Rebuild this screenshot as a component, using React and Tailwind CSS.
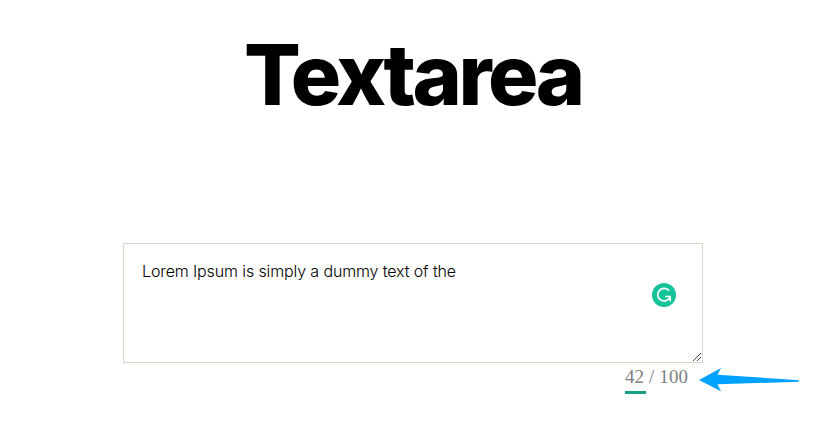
export default function App() {
  return (
    <main className="flex h-[423px] w-[833px] flex-col overflow-hidden bg-white">
      <h1 className="mt-[33px] ml-[244px] h-[84px] w-fit whitespace-nowrap font-['Inter',sans-serif] text-[84px] leading-[84px] font-extrabold tracking-[-3.5px] text-black">
        Textarea
      </h1>
      <section className="mt-[126px] ml-[123px] w-[580px]">
        <div className="relative h-[120px] border border-[#dbd7c9] bg-white pt-[15px] pl-[18px]">
          <p className="w-fit whitespace-nowrap font-['Inter',sans-serif] text-[16px] leading-6 font-light tracking-[-0.12px] text-black">
            Lorem Ipsum is simply a dummy text of the
          </p>
          <svg className="absolute top-[39px] left-[528px] size-6" viewBox="0 0 24 24" fill="none">
            <circle cx="12" cy="12" r="12" fill="#15c39a" />
            <path d="M17 7.8A6.3 6.3 0 1 0 17.6 14.6" stroke="white" strokeWidth="1.7" />
            <path d="M13.2 13.5H18.2V18.3" stroke="white" strokeWidth="1.7" />
          </svg>
          <svg className="absolute right-[1px] bottom-[1px] size-[8px]" viewBox="0 0 8 8" stroke="#44444c" strokeWidth="1">
            <path d="M0 8L8 0M4 8L8 4" />
          </svg>
        </div>
        <div className="flex">
          <div className="ml-[502px] w-[64px] shrink-0">
            <div className="h-[28px] whitespace-nowrap pt-[3px] font-['Liberation_Serif',serif] text-[19px] leading-[22px] tracking-[0.1px] text-[#808080]">
              42 / 100
            </div>
            <div className="h-[3px] w-[21px] bg-[#14a085]" />
          </div>
          <svg className="mt-[4px] ml-[9px] h-[26px] w-[102px] shrink-0" viewBox="0 0 102 26" fill="#00a2ff">
            <path d="M1 13L23 1L19.5 7.7L101 13.2V14.8L19.5 17.2L23 24.2Z" />
          </svg>
        </div>
      </section>
    </main>
  );
}
